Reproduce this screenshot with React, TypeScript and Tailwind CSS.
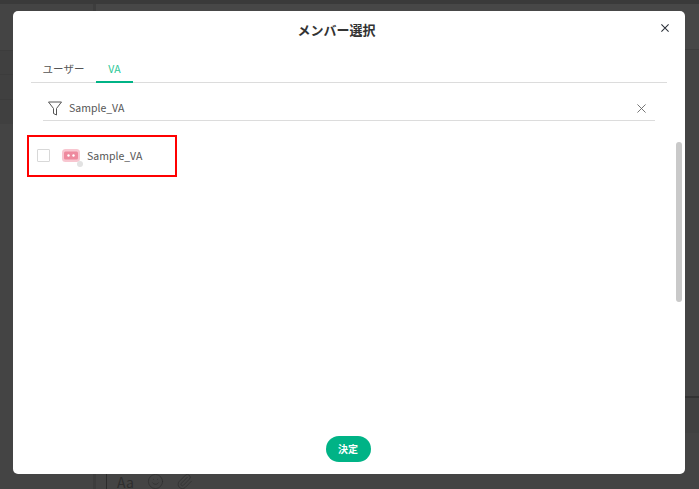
import { Smile, Paperclip } from "lucide-react";

const jp = "font-['Noto_Sans_CJK_JP','Noto_Sans',sans-serif]";

function X({ size, color, w }: { size: number; color: string; w: number }) {
  return (
    <svg width={size} height={size} viewBox="0 0 10 10" fill="none" stroke={color} strokeWidth={w}>
      <path d="M0.5 0.5 9.5 9.5M9.5 0.5 0.5 9.5" />
    </svg>
  );
}

export default function App() {
  return (
    <div className={`relative flex h-[489px] w-[699px] flex-col overflow-hidden bg-[#444444] ${jp}`}>
      {/* Dimmed page behind the dialog */}
      <div className="h-[4px] bg-[#3a3a3a]" />
      <div className="flex flex-1">
        <div className="flex w-[93px] flex-col">
          <div className="h-[46px]" />
          <div className="h-[24px] border-t border-[#3c3c3c] bg-[#404040]" />
          <div className="h-[25px] border-t border-[#3c3c3c] bg-[#404040]" />
          <div className="h-[25px] border-t border-[#3c3c3c] bg-[#404040]" />
        </div>
        <div className="w-[3px] bg-[#3d3d3d]" />
        <div className="flex flex-1 flex-col">
          <div className="h-[46px] border-b border-[#3e3e3e] bg-[#474747]" />
          <div className="h-[346px]" />
          <div className="h-[37px] border-t-2 border-[#333333] bg-[#414141]" />
          <div className="mt-auto flex h-[15px]">
            <div className="ml-[10px] h-full w-px bg-[#2c2c2c]" />
            <div className="ml-[10px] flex items-start text-[#2e2e2e]">
              <span className="mt-[1px] text-[14px] leading-[15px]">Aa</span>
              <Smile className="ml-[13px] mt-[-1px]" size={17} strokeWidth={1} />
              <Paperclip className="ml-[12px] mt-[-1px]" size={17} strokeWidth={1} />
            </div>
          </div>
        </div>
      </div>

      {/* Dialog */}
      <div className="absolute left-[13px] top-[11px] flex h-[463px] w-[672px] flex-col rounded-[5px] bg-white">
        <div className="relative flex h-[39px] items-center justify-center pb-[2px] pr-[25px]">
          <span className="text-[13px] font-bold text-[#333]">メンバー選択</span>
          <button className="absolute right-[16px] top-[13px]">
            <X size={8} color="#2a2f38" w={1.3} />
          </button>
        </div>
        <div className="mx-[18px] flex h-[33px] items-end border-b border-[#dcdcdc]">
          <div className="flex h-[21px] w-[65px] items-start justify-center text-[10.5px] leading-[15px] text-[#555]">ユーザー</div>
          <div className="-mb-[1px] flex h-[22px] w-[37px] items-start justify-center border-b-2 border-[#00b386] text-[10.5px] leading-[15px] text-[#2ac796]">VA</div>
        </div>
        <div className="mx-[30px] flex h-[38px] items-center border-b border-[#dcdcdc] pt-[13px]">
          <svg className="ml-[5px]" width="14" height="15" viewBox="0 0 14 15" fill="none" stroke="#555" strokeWidth="1">
            <path d="M0.5 1h13L8.5 7.5v6.5l-3-1.5V7.5z" />
          </svg>
          <span className="ml-[7px] flex-1 text-[10.5px] text-[#555]">Sample_VA</span>
          <span className="mr-[9px]"><X size={9} color="#666" w={1} /></span>
        </div>
        <div className="relative flex flex-1 flex-col pt-[14px]">
          <div className="absolute right-[3px] top-[21px] h-[160px] w-[6px] rounded-full bg-[#c9c9c9]" />
          <div className="ml-[14px] flex h-[42px] w-[150px] items-center border-2 border-[#ff0000] pb-[1px] pl-[8px]">
            <span className="h-[13px] w-[13px] rounded-[1px] border border-[#d8d8d8]" />
            <span className="relative ml-[12px] h-[13px] w-[18px]">
              <svg width="18" height="13" viewBox="0 0 18 13">
                <rect x="0" y="0" width="18" height="13" rx="3.5" fill="#f8c6d0" />
                <rect x="2" y="2.5" width="14" height="8" rx="1.5" fill="#ee8a9e" />
                <circle cx="6.5" cy="6.5" r="1.2" fill="#fff" />
                <circle cx="11.5" cy="6.5" r="1.2" fill="#fff" />
              </svg>
              <span className="absolute -bottom-[5px] -right-[3px] h-[6px] w-[6px] rounded-full bg-[#e2e2e2]" />
            </span>
            <span className="ml-[7px] text-[10.5px] text-[#555]">Sample_VA</span>
          </div>
          <div className="mb-[12px] mr-[2px] mt-auto flex justify-center">
            <button className="flex h-[26px] w-[45px] items-center justify-center rounded-full bg-[#00b386] pb-[1px] text-[10px] font-bold text-white">決定</button>
          </div>
        </div>
      </div>
    </div>
  );
}
